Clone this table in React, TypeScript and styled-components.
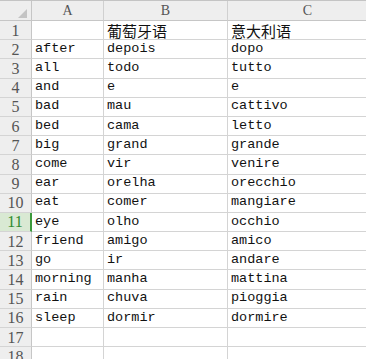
import React from "react";
import styled, { createGlobalStyle } from "styled-components";

const GlobalStyle = createGlobalStyle`
  html, body {
    margin: 0;
    padding: 0;
    background: #ffffff;
    overflow: hidden;
  }
`;

const rows: [string, string, string][] = [
  ["", "葡萄牙语", "意大利语"],
  ["after", "depois", "dopo"],
  ["all", "todo", "tutto"],
  ["and", "e", "e"],
  ["bad", "mau", "cattivo"],
  ["bed", "cama", "letto"],
  ["big", "grand", "grande"],
  ["come", "vir", "venire"],
  ["ear", "orelha", "orecchio"],
  ["eat", "comer", "mangiare"],
  ["eye", "olho", "occhio"],
  ["friend", "amigo", "amico"],
  ["go", "ir", "andare"],
  ["morning", "manha", "mattina"],
  ["rain", "chuva", "pioggia"],
  ["sleep", "dormir", "dormire"],
  ["", "", ""],
  ["", "", ""],
];

const SELECTED_ROW = 11;

const Page = styled.div`
  width: 366px;
  height: 359px;
  overflow: hidden;
  display: flex;
  flex-direction: column;
  background: #ffffff;
`;

const TopStrip = styled.div`
  height: 4px;
  display: flex;
  background: #e4e4e4;
  border-bottom: 1px solid #c4c4c4;
`;

const NameBox = styled.div`
  width: 121px;
  background: #ffffff;
  border-right: 1px solid #c8c8c8;
`;

const Grid = styled.div`
  display: grid;
  grid-template-columns: 32px 72px 124px 160px;
  grid-template-rows: 20px repeat(18, 19.2px);
`;

const Corner = styled.div`
  background: #eeeeee;
  border-right: 1px solid #c6c6c6;
  border-bottom: 1px solid #c6c6c6;
  display: flex;
  align-items: flex-end;
  justify-content: flex-end;
  padding: 0 4px 2px 0;
  box-sizing: border-box;
`;

const CornerMark = styled.div`
  width: 0;
  height: 0;
  border-left: 9px solid transparent;
  border-bottom: 9px solid #c4c4c4;
`;

const ColHead = styled.div`
  background: #eeeeee;
  border-right: 1px solid #d0d0d0;
  border-bottom: 1px solid #c6c6c6;
  box-sizing: border-box;
  display: flex;
  align-items: center;
  justify-content: center;
  font-family: "Liberation Serif", serif;
  font-size: 14px;
  color: #555555;
`;

const RowHead = styled.div<{ $selected?: boolean }>`
  background: ${(p) => (p.$selected ? "#d9e9d3" : "#eeeeee")};
  border-right: ${(p) => (p.$selected ? "2px solid #3c9a3c" : "1px solid #c6c6c6")};
  border-bottom: 1px solid #d4d4d4;
  box-sizing: border-box;
  display: flex;
  align-items: center;
  justify-content: center;
  padding-top: 1px;
  line-height: 1;
  font-family: "Liberation Serif", serif;
  font-size: 16px;
  color: ${(p) => (p.$selected ? "#2f8a2f" : "#555555")};
`;

const Cell = styled.div<{ $cjk?: boolean }>`
  border-right: 1px solid #d4d4d4;
  border-bottom: 1px solid #d4d4d4;
  box-sizing: border-box;
  display: flex;
  align-items: flex-end;
  padding: 0 0 ${(p) => (p.$cjk ? "1px" : "3px")} 3px;
  white-space: nowrap;
  overflow: hidden;
  line-height: 1;
  font-family: ${(p) =>
    p.$cjk
      ? '"Noto Sans CJK SC", sans-serif'
      : '"Liberation Mono", "DejaVu Sans Mono", monospace'};
  font-size: ${(p) => (p.$cjk ? "15px" : "13.5px")};
  color: #111111;
`;

const isCjk = (s: string) => /[\u4e00-\u9fff]/.test(s);

export default function App() {
  return (
    <Page>
      <GlobalStyle />
      <TopStrip>
        <NameBox />
      </TopStrip>
      <Grid>
        <Corner>
          <CornerMark />
        </Corner>
        <ColHead>A</ColHead>
        <ColHead>B</ColHead>
        <ColHead>C</ColHead>
        {rows.map((r, i) => (
          <React.Fragment key={i}>
            <RowHead $selected={i + 1 === SELECTED_ROW}>{i + 1}</RowHead>
            {r.map((v, j) => (
              <Cell key={j} $cjk={isCjk(v)}>
                {v}
              </Cell>
            ))}
          </React.Fragment>
        ))}
      </Grid>
    </Page>
  );
}
